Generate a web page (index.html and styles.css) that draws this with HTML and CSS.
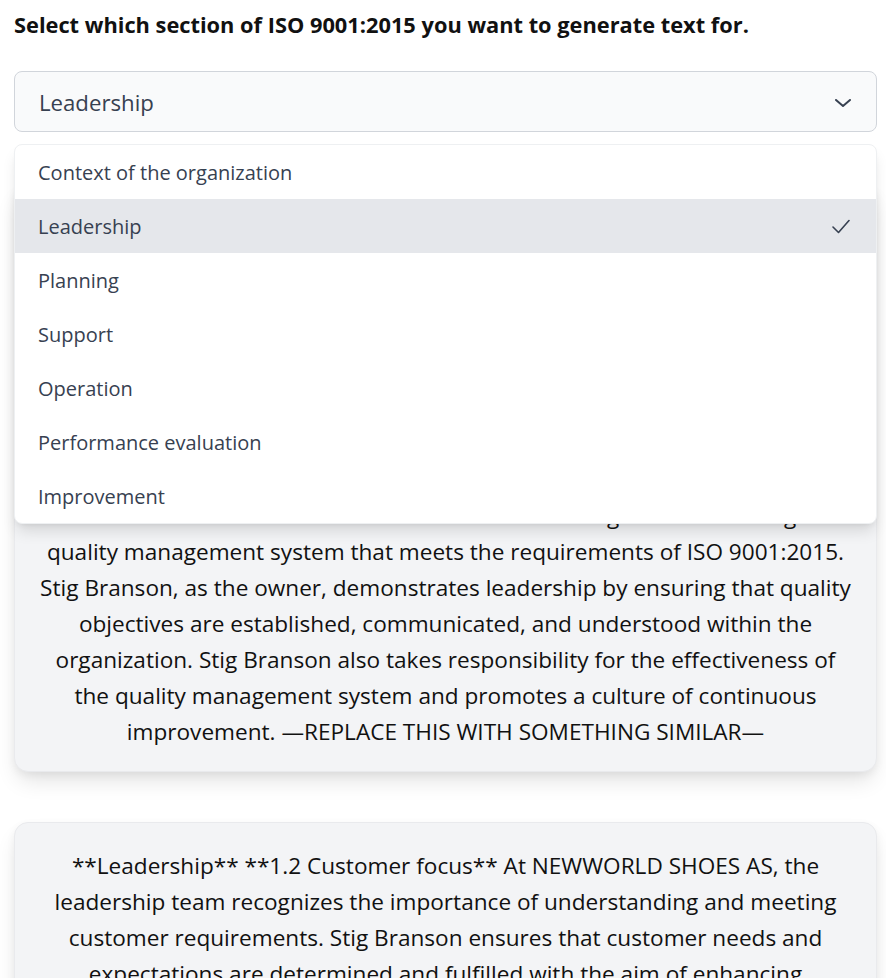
FILE: index.html
```html
<!DOCTYPE html>
<html lang="en">
<head>
<meta charset="utf-8">
<title>ISO 9001:2015 text generator</title>
<link rel="stylesheet" href="styles.css">
</head>
<body>
<main class="page">
  <h1 class="title">Select which section of ISO 9001:2015 you want to generate text for.</h1>

  <div class="select-wrap">
    <div class="select">
      <span class="select-value">Leadership</span>
      <svg class="chevron" width="16" height="8" viewBox="0 0 16 8" aria-hidden="true">
        <path d="M1 1 L8 7 L15 1" fill="none" stroke="#374151" stroke-width="2" stroke-linecap="round" stroke-linejoin="round"/>
      </svg>
    </div>
    <ul class="menu">
      <li class="option">Context of the organization</li>
      <li class="option selected">Leadership
        <svg class="check" width="18" height="15" viewBox="0 0 18 15" aria-hidden="true">
          <path d="M1 8 L6.5 13.5 L17 1.5" fill="none" stroke="#374151" stroke-width="1.6" stroke-linecap="round" stroke-linejoin="round"/>
        </svg>
      </li>
      <li class="option">Planning</li>
      <li class="option">Support</li>
      <li class="option">Operation</li>
      <li class="option">Performance evaluation</li>
      <li class="option">Improvement</li>
    </ul>
  </div>

  <section class="card card-first">
    <p class="card-text">**Leadership** **1.1 Leadership and commitment** Top management<br>demonstrates leadership and commitment with respect to<br>the quality management system by taking accountability for its<br>effectiveness and ensuring that the quality policy and objectives<br>are established and compatible with the strategic direction<br>of the organization. Top management ensures the integration of the<br>quality management system requirements into the business processes<br>and promotes the use of the process approach and risk-based thinking.<br>NEWWORLD SHOES AS is committed to establishing and maintaining a<br>quality management system that meets the requirements of ISO 9001:2015.<br>Stig Branson, as the owner, demonstrates leadership by ensuring that quality<br>objectives are established, communicated, and understood within the<br>organization. Stig Branson also takes responsibility for the effectiveness of<br>the quality management system and promotes a culture of continuous<br>improvement. —REPLACE THIS WITH SOMETHING SIMILAR—</p>
  </section>

  <section class="card">
    <p class="card-text">**Leadership** **1.2 Customer focus** At NEWWORLD SHOES AS, the<br>leadership team recognizes the importance of understanding and meeting<br>customer requirements. Stig Branson ensures that customer needs and<br>expectations are determined and fulfilled with the aim of enhancing<br>customer satisfaction. Risks and opportunities that can affect the<br>conformity of products and services are identified and addressed.</p>
  </section>
</main>
</body>
</html>
```

FILE: styles.css
```css
* { box-sizing: border-box; }

html, body {
  margin: 0;
  padding: 0;
  background: #ffffff;
}

body {
  font-family: "Open Sans", "Noto Sans", "Liberation Sans", sans-serif;
  color: #111827;
}

.page {
  padding: 11px 9px 40px 14px;
  display: flex;
  flex-direction: column;
}

.title {
  margin: 0;
  font-size: 21.8px;
  line-height: 28px;
  font-weight: 700;
  color: #111111;
  white-space: nowrap;
}

.select-wrap {
  position: relative;
  margin-top: 32px;
}

.select {
  height: 61px;
  border: 1px solid #d1d5db;
  border-radius: 8px;
  background: #f9fafb;
  display: flex;
  align-items: center;
  justify-content: space-between;
  padding: 2px 25px 0 24px;
}

.select-value {
  font-size: 22.2px;
  color: #374151;
}

.chevron { display: block; }

.menu {
  position: absolute;
  left: 0;
  right: 0;
  top: 73px;
  margin: 0;
  padding: 0;
  list-style: none;
  background: #ffffff;
  border: 1px solid #eef0f2;
  border-radius: 8px;
  overflow: hidden;
  box-shadow: 0 10px 15px -3px rgba(0,0,0,0.12), 0 4px 6px -4px rgba(0,0,0,0.1);
  z-index: 10;
}

.option {
  height: 54px;
  display: flex;
  align-items: center;
  justify-content: space-between;
  padding: 0 26px 0 23px;
  font-size: 20px;
  color: #374151;
}

.option.selected {
  background: #e5e7eb;
}

.check { display: block; }

.card {
  margin-top: 50px;
  background: #f3f4f6;
  border: 1px solid #e9eaed;
  border-radius: 14px;
  padding: 25px 20px 21px;
  box-shadow: 0 12px 22px -4px rgba(0,0,0,0.12), 0 3px 8px rgba(0,0,0,0.05);
}

.card-first {
  margin-top: 52px;
}

.card-text {
  margin: 0;
  text-align: center;
  font-size: 22.6px;
  line-height: 36px;
  color: #111111;
  white-space: nowrap;
}
```
